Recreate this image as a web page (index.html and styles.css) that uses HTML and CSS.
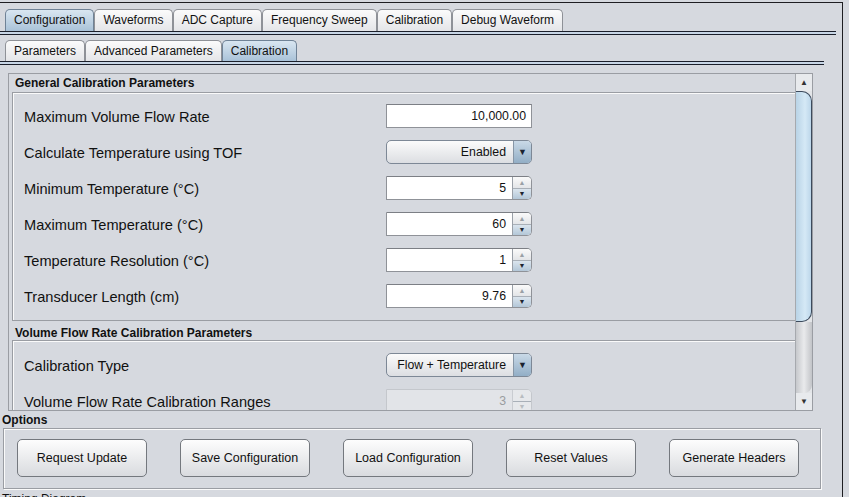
FILE: index.html
```html
<!DOCTYPE html>
<html>
<head>
<meta charset="utf-8">
<link rel="stylesheet" href="styles.css">
</head>
<body>
<div class="window">
  <div class="tabs top">
    <div class="tab sel">Configuration</div>
    <div class="tab">Waveforms</div>
    <div class="tab">ADC Capture</div>
    <div class="tab">Frequency Sweep</div>
    <div class="tab">Calibration</div>
    <div class="tab">Debug Waveform</div>
  </div>
  <div class="tabline l1"></div>
  <div class="tabs sub">
    <div class="tab">Parameters</div>
    <div class="tab">Advanced Parameters</div>
    <div class="tab sel">Calibration</div>
  </div>
  <div class="tabline l2"></div>

  <div class="scrollpane">
    <div class="viewport">
      <div class="sechead">General Calibration Parameters</div>
      <div class="secbox">
        <div class="row"><span class="lbl">Maximum Volume Flow Rate</span><div class="field text">10,000.00</div></div>
        <div class="row"><span class="lbl">Calculate Temperature using TOF</span><div class="combo"><span class="cval">Enabled</span><span class="carrow">&#9660;</span></div></div>
        <div class="row"><span class="lbl">Minimum Temperature (°C)</span><div class="field spin"><span class="sval">5</span><span class="sbtns"><span class="sup">&#9650;</span><span class="sdn">&#9660;</span></span></div></div>
        <div class="row"><span class="lbl">Maximum Temperature (°C)</span><div class="field spin"><span class="sval">60</span><span class="sbtns"><span class="sup">&#9650;</span><span class="sdn">&#9660;</span></span></div></div>
        <div class="row"><span class="lbl">Temperature Resolution (°C)</span><div class="field spin"><span class="sval">1</span><span class="sbtns"><span class="sup">&#9650;</span><span class="sdn">&#9660;</span></span></div></div>
        <div class="row"><span class="lbl">Transducer Length (cm)</span><div class="field spin"><span class="sval">9.76</span><span class="sbtns"><span class="sup">&#9650;</span><span class="sdn">&#9660;</span></span></div></div>
      </div>
      <div class="sechead h2">Volume Flow Rate Calibration Parameters</div>
      <div class="secbox b2">
        <div class="row"><span class="lbl">Calibration Type</span><div class="combo"><span class="cval">Flow + Temperature</span><span class="carrow">&#9660;</span></div></div>
        <div class="row"><span class="lbl">Volume Flow Rate Calibration Ranges</span><div class="field spin disabled"><span class="sval">3</span><span class="sbtns"><span class="sup">&#9650;</span><span class="sdn">&#9660;</span></span></div></div>
        <div class="row"><span class="lbl">Calibration Range 1</span><div class="field text">0.00</div></div>
      </div>
    </div>
    <div class="vscroll">
      <div class="sbarrow up">&#9650;</div>
      <div class="strack">
        <div class="sthumb"></div>
        <div class="srest"></div>
      </div>
      <div class="sbarrow dn">&#9660;</div>
    </div>
  </div>

  <div class="optlabel">Options</div>
  <div class="options">
    <div class="btn">Request Update</div>
    <div class="btn">Save Configuration</div>
    <div class="btn">Load Configuration</div>
    <div class="btn">Reset Values</div>
    <div class="btn">Generate Headers</div>
  </div>
  <div class="timing">Timing Diagram</div>
</div>
</body>
</html>
```

FILE: styles.css
```css
html, body {
  margin: 0;
  padding: 0;
  height: 497px;
  overflow: hidden;
  background: #d6d9df;
  font-family: "Liberation Sans", Arial, sans-serif;
  color: #111;
}

.window {
  margin-top: 2px;
  width: 843px;
  height: 495px;
  border-top: 1px solid #1e1e22;
  border-right: 1px solid #1e1e22;
  box-sizing: border-box;
  position: relative;
}

.tabs {
  display: flex;
  padding-left: 5px;
  align-items: flex-end;
}
.tabs.top { margin-top: 6px; height: 22px; }
.tabs.sub { margin-top: 5px; height: 21px; }

.tab {
  box-sizing: border-box;
  height: 100%;
  padding: 0 8px;
  margin-right: 0;
  font-size: 12px;
  line-height: 21px;
  border: 1px solid #8e9197;
  border-bottom: none;
  border-radius: 5px 5px 0 0;
  background: linear-gradient(#fbfbfb, #e4e5e8);
  white-space: nowrap;
}
.tab.sel {
  background: linear-gradient(#d9e6f1, #a9c2d8);
  border-color: #6f8296;
}
.tabs.sub .tab { line-height: 20px; }

.tabline {
  height: 4px;
  box-sizing: border-box;
  border-top: 1px solid #1b1f2b;
  border-bottom: 1px solid #1b1f2b;
  background: #c8d6e6;
}
.tabline.l1 { width: 836px; }
.tabline.l2 { width: 824px; }

.scrollpane {
  margin: 8px 0 0 8px;
  width: 805px;
  height: 338px;
  box-sizing: border-box;
  border: 1px solid #9a9da3;
  display: flex;
  overflow: hidden;
}
.viewport {
  flex: 1;
  overflow: hidden;
  padding-left: 3px;
}
.sechead {
  font-weight: bold;
  font-size: 12px;
  height: 18px;
  line-height: 19px;
  padding-left: 3px;
}
.sechead.h2 { height: 19px; line-height: 24px; }

.secbox {
  border-top: 1px solid #9a9da3;
  border-left: 1px solid #9a9da3;
  border-bottom: 1px solid #9a9da3;
  box-shadow: inset 1px 1px 0 #fafafa;
  padding: 11px 0 12px 11px;
  display: flex;
  flex-direction: column;
  gap: 12px;
}
.secbox.b2 { padding-top: 12px; }

.row {
  display: flex;
  align-items: center;
  height: 24px;
}
.lbl {
  width: 362px;
  font-size: 14.6px;
  padding-top: 1px;
}

.field {
  box-sizing: border-box;
  width: 146px;
  height: 24px;
  background: #fff;
  border: 1px solid #8f9298;
  border-top-color: #7c7f85;
  font-size: 12.3px;
  display: flex;
  align-items: center;
}
.field.text {
  justify-content: flex-end;
  padding-right: 5px;
}
.field.spin {
  border-radius: 0 5px 5px 0;
}
.sval {
  flex: 1;
  text-align: right;
  padding-right: 6px;
}
.sbtns {
  width: 18px;
  height: 100%;
  display: flex;
  flex-direction: column;
  border-left: 1px solid #9aa0a8;
  border-radius: 0 4px 4px 0;
  overflow: hidden;
}
.sup, .sdn {
  flex: 1;
  font-size: 7px;
  display: flex;
  align-items: center;
  justify-content: center;
}
.sup {
  background: linear-gradient(#fafafa, #e3e5e8);
  color: #9aa0a6;
  border-bottom: 1px solid #a9b0b8;
}
.sdn {
  background: linear-gradient(#dbe5ee, #b3c7d8);
  color: #1d2530;
}
.field.disabled {
  background: #e2e4e8;
  border-color: #c4c7cc;
  color: #9a9ca0;
}
.field.disabled .sbtns { border-left-color: #c9ccd1; }
.field.disabled .sup, .field.disabled .sdn {
  background: #e6e8eb;
  color: #b8bcc0;
}

.combo {
  box-sizing: border-box;
  width: 146px;
  height: 24px;
  border: 1px solid #7d8896;
  border-radius: 5px;
  background: linear-gradient(#fbfbfb, #dcdee2);
  display: flex;
  overflow: hidden;
  font-size: 12.3px;
}
.cval {
  flex: 1;
  text-align: right;
  padding-right: 7px;
  line-height: 22px;
}
.carrow {
  width: 17px;
  border-left: 1px solid #8796a6;
  background: linear-gradient(#c9d9e7, #92aec6);
  font-size: 9px;
  line-height: 22px;
  text-align: center;
  color: #1a2230;
}

.vscroll {
  width: 16px;
  flex: none;
  border-left: 1px solid #a6a9ae;
  display: flex;
  flex-direction: column;
  background: #e3e5e8;
}
.sbarrow {
  height: 17px;
  font-size: 8px;
  color: #333;
  text-align: center;
  line-height: 17px;
  background: #e8eaed;
}
.strack {
  flex: 1;
  display: flex;
  flex-direction: column;
}
.sthumb {
  height: 231px;
  box-sizing: border-box;
  border: 1px solid #3c4a5c;
  border-left: none;
  border-radius: 0 10px 10px 0;
  background: linear-gradient(90deg, #b9d3e6, #d5e9f6 60%, #bcd6ea);
}
.srest {
  flex: 1;
  border-radius: 0 0 8px 0;
  background: linear-gradient(90deg, #c6c8cc, #e9eaec 50%, #c2c4c8);
}

.optlabel {
  font-size: 12px;
  font-weight: bold;
  height: 17px;
  line-height: 18px;
  padding-left: 2px;
}
.options {
  margin-left: 3px;
  width: 818px;
  height: 61px;
  box-sizing: border-box;
  border: 1px solid #9a9da3;
  box-shadow: inset 1px 1px 0 #fafafa, 1px 1px 0 #fafafa;
  display: flex;
  gap: 33px;
  padding: 10px 0 0 13px;
}
.btn {
  box-sizing: border-box;
  width: 130px;
  height: 38px;
  border: 1px solid #74787e;
  border-radius: 5px;
  background: linear-gradient(#fdfdfd, #e9eaec 55%, #d9dbdf);
  font-size: 12.5px;
  display: flex;
  align-items: center;
  justify-content: center;
}
.timing {
  font-size: 12px;
  padding-left: 2px;
  margin-top: 3px;
}
```
